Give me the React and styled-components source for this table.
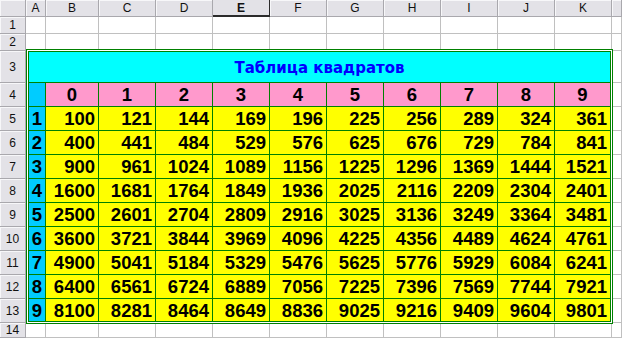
import styled, { createGlobalStyle } from "styled-components";

const GlobalStyle = createGlobalStyle`
  html, body {
    margin: 0;
    padding: 0;
    background: #ffffff;
  }
  body {
    font-family: "Liberation Sans", Arial, sans-serif;
  }
`;

const Sheet = styled.div`
  display: grid;
  grid-template-columns: 26px 20px 53px repeat(9, 57px) 1fr;
  grid-template-rows: 17px 17px 17px 32px 24px repeat(9, 24px) 1fr;
  width: 622px;
  height: 338px;
  overflow: hidden;
  background: #ffffff;
`;

const Head = styled.div`
  box-sizing: border-box;
  display: flex;
  align-items: center;
  justify-content: center;
  background: #e3e2e7;
  border-right: 1px solid ${(p) => (p.$selected ? "#2b2b2b" : "#a9a8ad")};
  border-bottom: 1px solid ${(p) => (p.$selected ? "#2b2b2b" : "#a9a8ad")};
  box-shadow: ${(p) => (p.$selected ? "inset 0 -1px 0 #2b2b2b" : "inset 1px 1px 0 #f7f7f9")};
  font-size: 12px;
  font-weight: ${(p) => (p.$selected ? 700 : 400)};
  color: #111111;
  line-height: 1;
`;

const Cell = styled.div`
  box-sizing: border-box;
  border-right: 1px solid #c0c0c0;
  border-bottom: 1px solid #c0c0c0;
`;

const TableBox = styled.div`
  grid-column: span 11;
  grid-row: span 11;
  margin: -2px -1px -1px 0;
  border: 3px double #008000;
  background: #ffffff;
  position: relative;
  z-index: 1;
`;

const Grid = styled.div`
  display: grid;
  grid-template-columns: 16px 52px repeat(8, 56px) 1fr;
  grid-template-rows: 30px 23px repeat(8, 23px) 1fr;
  gap: 1px;
  height: 100%;
  background: #008000;
`;

const Title = styled.div`
  grid-column: 1 / -1;
  display: flex;
  align-items: center;
  justify-content: center;
  background: #00ffff;
  color: #0000ff;
  font-family: "DejaVu Sans", "Liberation Sans", sans-serif;
  font-weight: 700;
  font-size: 15px;
  padding-top: 1px;
`;

const colors = {
  index: "#00ccff",
  head: "#ff99cc",
  value: "#ffff00",
};

const Num = styled.div`
  background: ${(p) => colors[p.$kind]};
  font-weight: 700;
  font-size: 18.5px;
  line-height: 20px;
  padding-top: 2px;
  box-sizing: border-box;
  color: #000000;
  text-align: ${(p) => (p.$kind === "value" ? "right" : "center")};
  padding-right: ${(p) => (p.$kind === "value" ? "3px" : "0")};
  white-space: nowrap;
`;

const letters = ["A", "B", "C", "D", "E", "F", "G", "H", "I", "J", "K", ""];
const digits = [0, 1, 2, 3, 4, 5, 6, 7, 8, 9];
const blanks = Array.from({ length: 12 });

export default function App() {
  return (
    <>
      <GlobalStyle />
      <Sheet>
        <Head />
        {letters.map((l, i) => (
          <Head key={"c" + i} $selected={l === "E"}>
            {l}
          </Head>
        ))}

        {[1, 2].map((r) => [
          <Head key={"h" + r}>{r}</Head>,
          ...blanks.map((_, i) => <Cell key={r + "-" + i} />),
        ])}

        <Head>3</Head>
        <TableBox>
          <Grid>
            <Title>Таблица квадратов</Title>
            <Num $kind="index" />
            {digits.map((d) => (
              <Num key={"d" + d} $kind="head">
                {d}
              </Num>
            ))}
            {digits.slice(1).map((r) => [
              <Num key={"i" + r} $kind="index">
                {r}
              </Num>,
              ...digits.map((c) => (
                <Num key={r + "v" + c} $kind="value">
                  {(r * 10 + c) * (r * 10 + c)}
                </Num>
              )),
            ])}
          </Grid>
        </TableBox>
        <Cell />

        {[4, 5, 6, 7, 8, 9, 10, 11, 12, 13].map((r) => [
          <Head key={"h" + r}>{r}</Head>,
          <Cell key={"l" + r} />,
        ])}

        <Head>14</Head>
        {blanks.map((_, i) => (
          <Cell key={"b" + i} />
        ))}
      </Sheet>
    </>
  );
}
